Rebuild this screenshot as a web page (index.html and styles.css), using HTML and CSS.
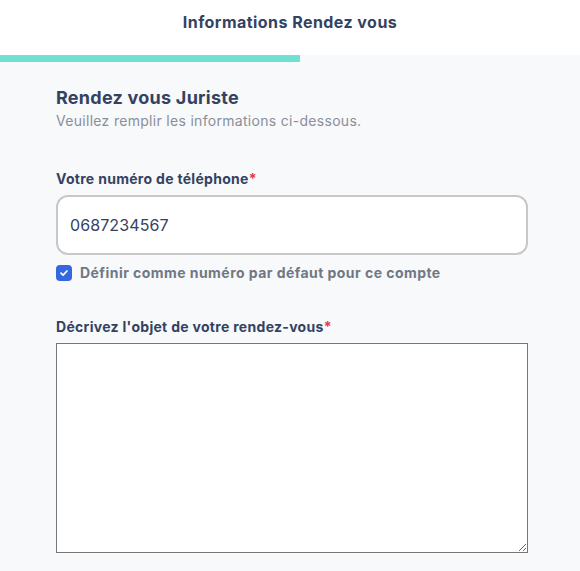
FILE: index.html
```html
<!DOCTYPE html>
<html lang="fr">
<head>
<meta charset="utf-8">
<link rel="stylesheet" href="styles.css">
</head>
<body>
<header class="top">
  <h1 class="top-title">Informations Rendez vous</h1>
</header>
<div class="progress"><div class="progress-fill" style="width:300px"></div></div>
<main class="content">
  <h2 class="section-title">Rendez vous Juriste</h2>
  <p class="section-sub">Veuillez remplir les informations ci-dessous.</p>

  <label class="field-label" for="tel">Votre numéro de téléphone<span class="req">*</span></label>
  <input class="phone" id="tel" type="text" value="0687234567">
  <label class="check">
    <span class="check-box">
      <svg width="10" height="10" viewBox="0 0 10 10"><path d="M2 5.2 L4.1 7.2 L8 3" fill="none" stroke="#fff" stroke-width="1.7" stroke-linecap="round" stroke-linejoin="round"/></svg>
    </span>
    <span class="check-text">Définir comme numéro par défaut pour ce compte</span>
  </label>

  <label class="field-label second" for="obj">Décrivez l'objet de votre rendez-vous<span class="req">*</span></label>
  <textarea class="desc" id="obj"></textarea>
</main>
</body>
</html>
```
FILE: styles.css
```css
* { box-sizing: border-box; }
html, body { margin: 0; padding: 0; }
body {
  font-family: Inter, "Open Sans", sans-serif;
  background: #f7f9fb;
  color: #344262;
  width: 580px;
  min-height: 571px;
}
.top {
  background: #fff;
  height: 55px;
  display: flex;
  justify-content: center;
  padding-top: 12px;
}
.top-title {
  margin: 0;
  font-size: 16px;
  font-weight: 700;
  letter-spacing: 0.45px;
  color: #344262;
  line-height: 20px;
}
.progress {
  height: 7px;
  background: #f7f9fb;
}
.progress-fill {
  height: 7px;
  background: #6ee1d3;
}
.content {
  padding: 24px 52px 0 56px;
  display: flex;
  flex-direction: column;
}
.section-title {
  margin: 0;
  font-size: 18px;
  font-weight: 700;
  letter-spacing: 0.25px;
  line-height: 24px;
  color: #344262;
}
.section-sub {
  margin: 2px 0 0;
  font-size: 14px;
  letter-spacing: 0.3px;
  line-height: 18px;
  color: #8a8f98;
}
.field-label {
  margin-top: 40px;
  font-size: 14px;
  font-weight: 700;
  letter-spacing: 0.3px;
  line-height: 18px;
  color: #344262;
}
.field-label.second { margin-top: 37px; }
.req { color: #e5384f; }
.phone {
  margin-top: 7px;
  width: 472px;
  height: 60px;
  border: 2px solid #c8c8c8;
  border-radius: 12px;
  background: #fff;
  padding: 0 12px;
  font-family: Inter, sans-serif;
  font-size: 16px;
  letter-spacing: 0.1px;
  color: #344262;
  outline: none;
}
.check {
  margin-top: 10px;
  display: flex;
  align-items: center;
  gap: 8px;
}
.check-box {
  width: 16px;
  height: 16px;
  border-radius: 4px;
  background: #3567e0;
  display: flex;
  align-items: center;
  justify-content: center;
}
.check-text {
  font-size: 14px;
  font-weight: 700;
  letter-spacing: 0.45px;
  color: #727784;
  line-height: 16px;
}
.desc {
  margin-top: 7px;
  width: 472px;
  height: 210px;
  border: 1px solid #767676;
  background: #fff;
  resize: vertical;
  outline: none;
}
```
